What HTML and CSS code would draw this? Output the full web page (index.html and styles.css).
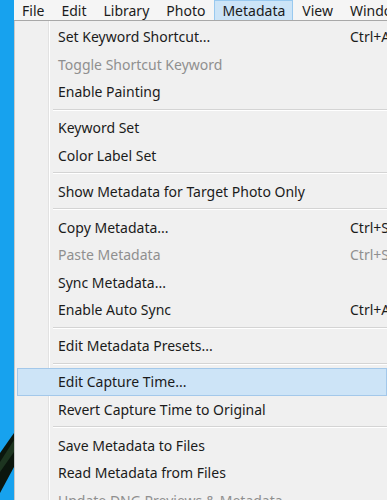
FILE: index.html
```html
<!DOCTYPE html>
<html lang="en">
<head>
    <meta charset="UTF-8">
    <title>Metadata Menu</title>
    <link rel="stylesheet" href="styles.css">
</head>
<body>
    <div class="desktop">
        <svg class="wallpaper" width="14" height="500" viewBox="0 0 14 500">
            <path d="M14 433 L14 467 L0 493 L0 453 Z" fill="#0b160d"/>
            <path d="M14 440 L14 452 L0 472 L0 462 Z" fill="#1d3520"/>
        </svg>
    </div>

    <div class="app">
        <div class="menubar">
            <span class="menubar-item">File</span>
            <span class="menubar-item">Edit</span>
            <span class="menubar-item">Library</span>
            <span class="menubar-item">Photo</span>
            <span class="menubar-item active">Metadata</span>
            <span class="menubar-item">View</span>
            <span class="menubar-item">Window</span>
        </div>

        <div class="menu">
            <div class="menu-item"><span class="label">Set Keyword Shortcut...</span><span class="shortcut">Ctrl+Alt+Shift+K</span></div>
            <div class="menu-item disabled"><span class="label">Toggle Shortcut Keyword</span></div>
            <div class="menu-item"><span class="label">Enable Painting</span></div>
            <div class="menu-sep"></div>
            <div class="menu-item"><span class="label">Keyword Set</span></div>
            <div class="menu-item"><span class="label">Color Label Set</span></div>
            <div class="menu-sep"></div>
            <div class="menu-item"><span class="label">Show Metadata for Target Photo Only</span></div>
            <div class="menu-sep"></div>
            <div class="menu-item"><span class="label">Copy Metadata...</span><span class="shortcut">Ctrl+Shift+C</span></div>
            <div class="menu-item disabled"><span class="label">Paste Metadata</span><span class="shortcut">Ctrl+Shift+V</span></div>
            <div class="menu-item"><span class="label">Sync Metadata...</span></div>
            <div class="menu-item"><span class="label">Enable Auto Sync</span><span class="shortcut">Ctrl+Alt+Shift+A</span></div>
            <div class="menu-sep"></div>
            <div class="menu-item"><span class="label">Edit Metadata Presets...</span></div>
            <div class="menu-sep"></div>
            <div class="menu-item hover"><span class="label">Edit Capture Time...</span></div>
            <div class="menu-item"><span class="label">Revert Capture Time to Original</span></div>
            <div class="menu-sep"></div>
            <div class="menu-item"><span class="label">Save Metadata to Files</span></div>
            <div class="menu-item"><span class="label">Read Metadata from Files</span></div>
            <div class="menu-item disabled"><span class="label">Update DNG Previews &amp; Metadata</span></div>
        </div>
    </div>
</body>
</html>
```

FILE: styles.css
```css
body {
    margin: 0;
    padding: 0;
    width: 387px;
    height: 500px;
    overflow: hidden;
    display: flex;
    font-family: 'Noto Sans', Arial, sans-serif;
    color: #1b1b1b;
    background-color: #f0f0f0;
}

.desktop {
    width: 14px;
    flex-shrink: 0;
    background-color: #17a2ee;
}

.wallpaper {
    display: block;
}

.app {
    flex: 1;
    min-width: 0;
    display: flex;
    flex-direction: column;
    overflow: hidden;
}

.menubar {
    height: 20px;
    display: flex;
    background-color: #f5f5f5;
    border-bottom: 1px solid #a8a8a8;
    white-space: nowrap;
    font-size: 14px;
    line-height: 19px;
}

.menubar-item {
    padding: 0 7px;
    margin-right: 1px;
    border: 1px solid transparent;
    border-bottom: 0;
}

.menubar-item.active {
    background-color: #cce4f7;
    border-color: #99c9ef;
}

.menu {
    flex: 1;
    padding: 2px 0 0 2px;
    border-left: 1px solid #c8c8c8;
    background-color: #f0f0f0;
    background-image: linear-gradient(to right, transparent 33px, #e2e2e2 33px, #e2e2e2 34px, #ffffff 34px, #ffffff 35px, transparent 35px);
    font-size: 14px;
    white-space: nowrap;
}

.menu-item {
    height: 27.5px;
    display: flex;
    align-items: center;
    padding-left: 40px;
    box-sizing: border-box;
    border: 1px solid transparent;
}

.menu-item .label {
    flex: 0 0 292px;
}

.menu-item.disabled {
    color: #8f8f8f;
}

.menu-item.hover {
    background-color: #cde4f7;
    border-color: #a3c8ea;
}

.menu-sep {
    height: 8.5px;
    margin-left: 36px;
    background-image: linear-gradient(to bottom, transparent 3px, #d4d4d4 3px, #d4d4d4 4px, #ffffff 4px, #ffffff 5px, transparent 5px);
}
```
